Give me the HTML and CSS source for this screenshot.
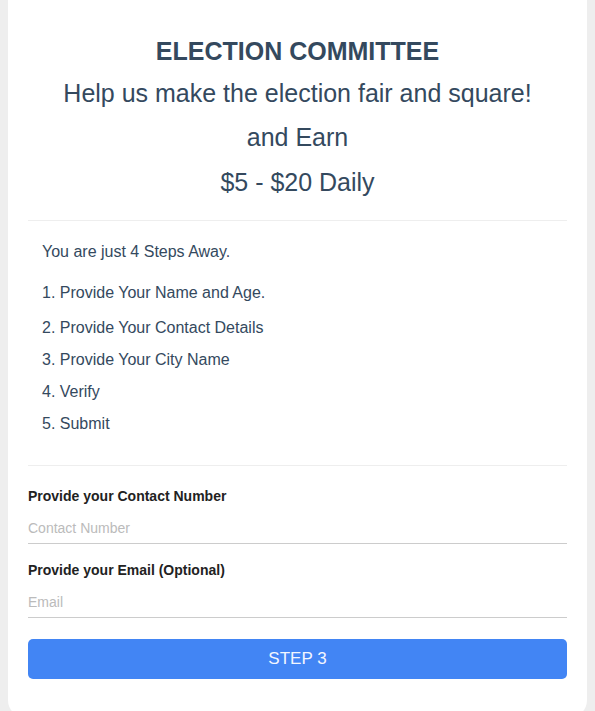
FILE: index.html
```html
<!DOCTYPE html>
<html lang="en">
<head>
<meta charset="utf-8">
<title>Election Committee</title>
<link rel="stylesheet" href="styles.css">
</head>
<body>
<div class="card">
  <header class="hero">
    <h1 class="title">ELECTION COMMITTEE</h1>
    <p class="tagline">Help us make the election fair and square!</p>
    <p class="tagline">and Earn</p>
    <p class="tagline tagline-last">$5 - $20 Daily</p>
  </header>
  <hr class="divider">
  <section class="steps">
    <p class="intro">You are just 4 Steps Away.</p>
    <ol class="step-list">
      <li class="step step-first">1. Provide Your Name and Age.</li>
      <li class="step">2. Provide Your Contact Details</li>
      <li class="step">3. Provide Your City Name</li>
      <li class="step">4. Verify</li>
      <li class="step">5. Submit</li>
    </ol>
  </section>
  <hr class="divider divider-form">
  <form class="form">
    <div class="field">
      <label class="label" for="phone">Provide your Contact Number</label>
      <input class="input" id="phone" type="text" placeholder="Contact Number">
    </div>
    <div class="field">
      <label class="label" for="email">Provide your Email (Optional)</label>
      <input class="input" id="email" type="text" placeholder="Email">
    </div>
    <button class="btn" type="button">STEP 3</button>
  </form>
</div>
</body>
</html>
```
FILE: styles.css
```css
html, body {
  margin: 0;
  padding: 0;
}
body {
  background: #eeeeee;
  font-family: "Liberation Sans", Arial, sans-serif;
  color: #34495e;
}
.card {
  background: #ffffff;
  margin: 0 8px;
  padding: 20px 20px 39px;
  border-radius: 0 0 18px 18px;
}
.hero {
  text-align: center;
}
.title {
  margin: 16px 0 5px;
  font-size: 25px;
  line-height: 30px;
  font-weight: bold;
  color: #34495e;
}
.tagline {
  margin: 0;
  font-size: 25px;
  line-height: 44px;
  color: #34495e;
}
.tagline-last {
  line-height: 47px;
}
.divider {
  border: 0;
  border-top: 1px solid #eeeeee;
  margin: 14px 0 0;
  height: 0;
}
.steps {
  padding: 20px 14px 0;
}
.intro {
  margin: 0;
  font-size: 16px;
  line-height: 22px;
  color: #34495e;
}
.step-list {
  list-style: none;
  margin: 19px 0 0;
  padding: 0;
}
.step {
  font-size: 16px;
  line-height: 22px;
  margin-bottom: 10px;
  color: #34495e;
}
.step-first {
  margin-bottom: 13px;
}
.step:last-child {
  margin-bottom: 0;
}
.divider-form {
  margin-top: 30px;
}
.form {
  display: flex;
  flex-direction: column;
  padding-top: 21px;
}
.field {
  display: flex;
  flex-direction: column;
  margin-bottom: 17px;
}
.field:last-of-type {
  margin-bottom: 21px;
}
.label {
  font-size: 14px;
  line-height: 18px;
  font-weight: bold;
  color: #222222;
}
.input {
  box-sizing: border-box;
  height: 38px;
  margin-top: 1px;
  padding: 7px 0 0;
  border: 0;
  border-bottom: 1px solid #cccccc;
  font-family: "Liberation Sans", Arial, sans-serif;
  font-size: 14px;
  line-height: 30px;
  color: #333333;
  outline: none;
  background: transparent;
}
.input::placeholder {
  color: #bbbbbb;
}
.btn {
  height: 40px;
  border: 0;
  border-radius: 5px;
  background: #4285f4;
  color: #f2f6ff;
  font-family: "Liberation Sans", Arial, sans-serif;
  font-size: 17px;
  cursor: pointer;
}
```
